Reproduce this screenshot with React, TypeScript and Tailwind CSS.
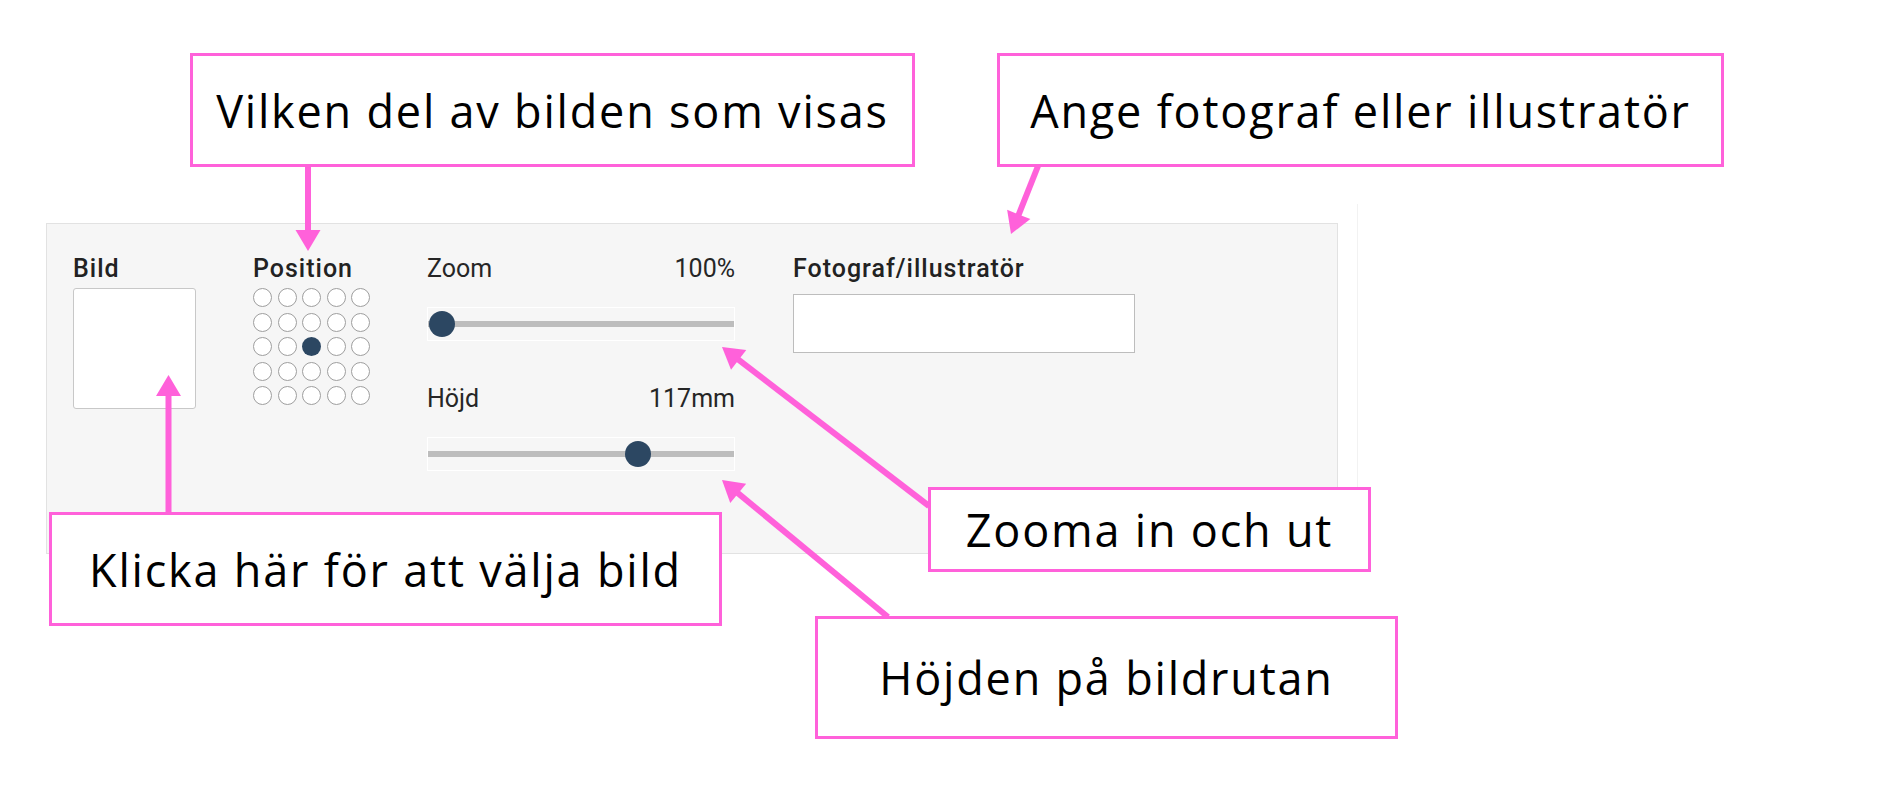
// Image block editor settings panel with callout notes pointing at each control.

type Pt = { x: number; y: number };

const PINK = "#ff61da";

function Arrow({ from, to }: { from: Pt; to: Pt }) {
  // shaft ends where the head starts so the tip stays sharp
  const dx = to.x - from.x;
  const dy = to.y - from.y;
  const len = Math.hypot(dx, dy);
  const ux = dx / len;
  const uy = dy / len;
  const headLen = 21;
  const half = 12.5;
  const bx = to.x - ux * headLen;
  const by = to.y - uy * headLen;
  const px = -uy * half;
  const py = ux * half;
  return (
    <g>
      <line x1={from.x} y1={from.y} x2={bx + ux * 2} y2={by + uy * 2} stroke={PINK} strokeWidth={6} />
      <polygon points={`${to.x},${to.y} ${bx + px},${by + py} ${bx - px},${by - py}`} fill={PINK} />
    </g>
  );
}

function Note({ className, children }: { className: string; children: string }) {
  return (
    <div
      className={`absolute flex items-center justify-center border-[3px] border-[#ff61da] bg-white text-[45px] font-normal leading-none tracking-[0.04em] text-black font-['Open_Sans','Liberation_Sans',sans-serif] ${className}`}
    >
      {children}
    </div>
  );
}

function Slider({ knobLeft }: { knobLeft: number }) {
  return (
    <div className="relative mt-[23px] flex h-[34px] items-center border border-white">
      <div className="h-[6px] w-full bg-[#bdbdbd]" />
      <div
        className="absolute top-1/2 h-[26px] w-[26px] -translate-y-1/2 rounded-full bg-[#2c4762]"
        style={{ left: knobLeft }}
      />
    </div>
  );
}

function PositionGrid({ selected }: { selected: number }) {
  return (
    <div className="mt-[4.5px] grid w-max grid-cols-5 gap-x-[5.5px] gap-y-[5.5px]">
      {Array.from({ length: 25 }, (_, i) =>
        i === selected ? (
          <div key={i} className="h-[19px] w-[19px] rounded-full bg-[#2c4762]" />
        ) : (
          <div key={i} className="h-[19px] w-[19px] rounded-full border border-[#9e9e9e] bg-white" />
        )
      )}
    </div>
  );
}

export default function App() {
  return (
    <div className="relative h-[796px] w-[1882px] overflow-hidden bg-white font-['Roboto',sans-serif]">
      <div className="flex pl-[46px] pt-[223px]">
        <div className="flex h-[331px] w-[1292px] border border-[#e2e2e2] bg-[#f6f6f6] pl-[26px] pt-[29.5px] text-[25px] leading-[30px] text-[#222]">
          <div className="w-[123px]">
            <div className="font-medium tracking-[0.04em]">Bild</div>
            <div className="mt-[4.5px] h-[121px] w-[123px] rounded-[3px] border border-[#c8c8c8] bg-white" />
          </div>

          <div className="ml-[57px] w-[118px]">
            <div className="font-medium tracking-[0.04em]">Position</div>
            <PositionGrid selected={12} />
          </div>

          <div className="ml-[56px] w-[308px] text-[#262626]">
            <div className="flex justify-between">
              <span>Zoom</span>
              <span>100%</span>
            </div>
            <Slider knobLeft={1} />
            <div className="mt-[43.5px] flex justify-between">
              <span>Höjd</span>
              <span>117mm</span>
            </div>
            <Slider knobLeft={197} />
          </div>

          <div className="ml-[58px] w-[342px]">
            <div className="font-medium tracking-[0.04em]">Fotograf/illustratör</div>
            <div className="mt-[10.5px] h-[59px] w-[342px] border border-[#bdbdbd] bg-white" />
          </div>
        </div>
        <div className="-mt-[19px] ml-[19px] h-[361px] w-px bg-[#f2f2f2]" />
      </div>

      <svg className="pointer-events-none absolute inset-0" width={1882} height={796}>
        <Arrow from={{ x: 308, y: 166 }} to={{ x: 308, y: 251 }} />
        <Arrow from={{ x: 1038, y: 166 }} to={{ x: 1011, y: 234 }} />
        <Arrow from={{ x: 929, y: 506 }} to={{ x: 722, y: 347 }} />
        <Arrow from={{ x: 888, y: 617 }} to={{ x: 722, y: 480 }} />
        <Arrow from={{ x: 168.5, y: 513 }} to={{ x: 168.5, y: 375 }} />
      </svg>

      <Note className="left-[190px] top-[53px] h-[114px] w-[725px]">Vilken del av bilden som visas</Note>
      <Note className="left-[997px] top-[53px] h-[114px] w-[727px]">Ange fotograf eller illustratör</Note>
      <Note className="left-[928px] top-[487px] h-[85px] w-[443px]">Zooma in och ut</Note>
      <Note className="left-[815px] top-[616px] h-[123px] w-[583px]">Höjden på bildrutan</Note>
      <Note className="left-[49px] top-[512px] h-[114px] w-[673px]">Klicka här för att välja bild</Note>
    </div>
  );
}
